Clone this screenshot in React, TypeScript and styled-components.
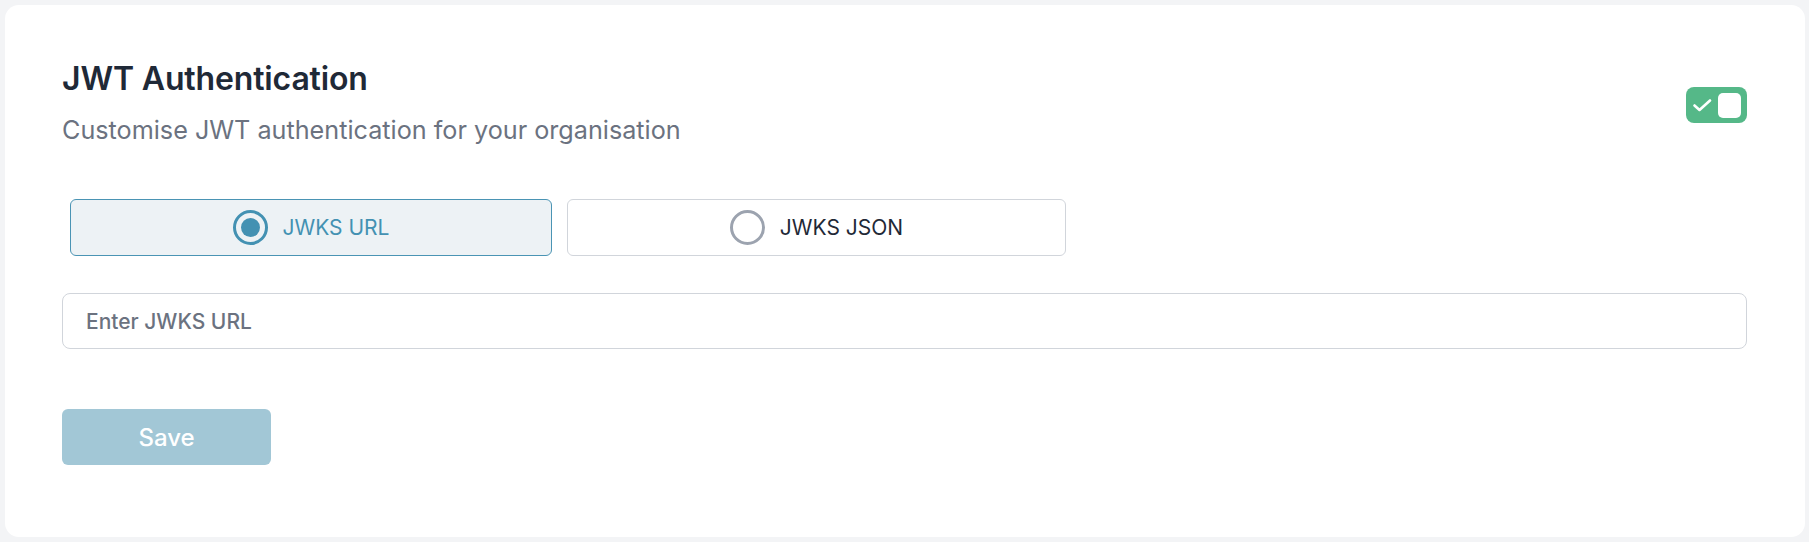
import React, { useState } from "react";
import styled, { createGlobalStyle } from "styled-components";

const Global = createGlobalStyle`
  html, body { margin: 0; padding: 0; background: #f3f4f6; }
  body { font-family: Inter, "Noto Sans", sans-serif; -webkit-font-smoothing: antialiased; }
  * { box-sizing: border-box; }
`;

const Page = styled.div`
  padding: 5px 4px 5px 5px;
`;

const Card = styled.section`
  background: #ffffff;
  border-radius: 14px;
  height: 532px;
  padding: 54px 58px 0 57px;
  display: flex;
  flex-direction: column;
`;

const Header = styled.div`
  display: flex;
  justify-content: space-between;
  align-items: flex-start;
`;

const TitleBlock = styled.div`
  display: flex;
  flex-direction: column;
`;

const Title = styled.h2`
  margin: 0;
  font-size: 32px;
  line-height: 40px;
  font-weight: 600;
  color: #1f2937;
  letter-spacing: -0.15px;
`;

const Subtitle = styled.p`
  margin: 15px 0 0;
  font-size: 25.2px;
  line-height: 32px;
  font-weight: 400;
  color: #6b7280;
`;

const Toggle = styled.button<{ $on: boolean }>`
  margin-top: 28px;
  width: 61px;
  height: 36px;
  border: none;
  border-radius: 8px;
  background: ${(p) => (p.$on ? "#55b888" : "#d1d5db")};
  padding: 0 6px 0 7px;
  display: flex;
  align-items: center;
  justify-content: space-between;
  cursor: pointer;
`;

const Knob = styled.span`
  width: 23px;
  height: 25px;
  border-radius: 5px;
  background: #ffffff;
`;

const RadioRow = styled.div`
  margin: 53px 0 0 8px;
  display: flex;
  gap: 15px;
`;

const Option = styled.button<{ $selected: boolean; $w: number }>`
  width: ${(p) => p.$w}px;
  height: 57px;
  border-radius: 6px;
  border: 1px solid ${(p) => (p.$selected ? "#4a94b4" : "#d1d5db")};
  background: ${(p) => (p.$selected ? "#edf2f5" : "#ffffff")};
  display: flex;
  align-items: center;
  justify-content: center;
  gap: 15px;
  font-family: Inter, sans-serif;
  font-size: 21px;
  font-weight: 400;
  color: ${(p) => (p.$selected ? "#4391b2" : "#1f2937")};
  cursor: pointer;
  padding: 0;
`;

const RadioCircle = styled.span<{ $selected: boolean }>`
  width: 35px;
  height: 35px;
  border-radius: 50%;
  border: 3px solid ${(p) => (p.$selected ? "#4391b2" : "#9ca3af")};
  display: flex;
  align-items: center;
  justify-content: center;
  &::after {
    content: "";
    width: 19px;
    height: 19px;
    border-radius: 50%;
    background: ${(p) => (p.$selected ? "#4391b2" : "transparent")};
  }
`;

const Input = styled.input`
  margin-top: 37px;
  width: 100%;
  height: 56px;
  border: 1px solid #d1d5db;
  border-radius: 8px;
  padding: 0 23px;
  font-family: Inter, sans-serif;
  font-size: 21px;
  font-weight: 500;
  color: #1f2937;
  outline: none;
  &::placeholder { color: #6b7280; }
`;

const SaveButton = styled.button`
  margin-top: 60px;
  width: 209px;
  height: 56px;
  border: none;
  border-radius: 6px;
  background: #a2c7d6;
  color: #ffffff;
  font-family: Inter, sans-serif;
  font-size: 24px;
  font-weight: 500;
  cursor: not-allowed;
`;

export default function App() {
  const [mode, setMode] = useState<"url" | "json">("url");
  const [on, setOn] = useState(true);
  return (
    <Page>
      <Global />
      <Card>
        <Header>
          <TitleBlock>
            <Title>JWT Authentication</Title>
            <Subtitle>Customise JWT authentication for your organisation</Subtitle>
          </TitleBlock>
          <Toggle $on={on} onClick={() => setOn(!on)} aria-label="toggle">
            <svg width="19" height="13" viewBox="0 0 19 13" fill="none">
              <path d="M1.5 6.5 L6.5 11 L17 1.5" stroke="#fff" strokeWidth="2.6" strokeLinecap="round" strokeLinejoin="round" />
            </svg>
            <Knob />
          </Toggle>
        </Header>
        <RadioRow>
          <Option $selected={mode === "url"} $w={482} onClick={() => setMode("url")}>
            <RadioCircle $selected={mode === "url"} />
            JWKS URL
          </Option>
          <Option $selected={mode === "json"} $w={499} onClick={() => setMode("json")}>
            <RadioCircle $selected={mode === "json"} />
            JWKS JSON
          </Option>
        </RadioRow>
        <Input placeholder={mode === "url" ? "Enter JWKS URL" : "Enter JWKS JSON"} />
        <SaveButton disabled>Save</SaveButton>
      </Card>
    </Page>
  );
}
